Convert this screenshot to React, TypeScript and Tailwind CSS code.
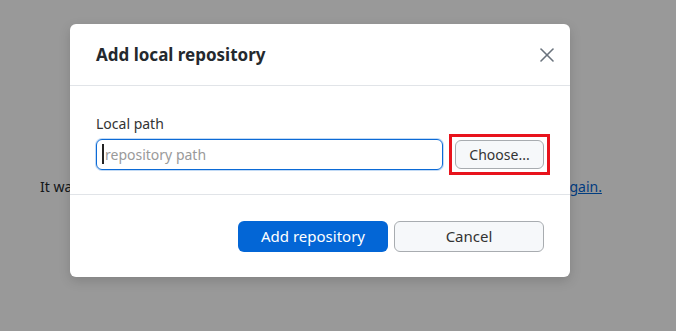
import { X } from "lucide-react";

const font = { fontFamily: '"Noto Sans", "Open Sans", sans-serif' };

const App = () => {
  return (
    <div className="relative w-[676px] h-[331px] bg-white overflow-hidden" style={font}>
      <p className="pt-[177px] pl-[40px] text-[14px] leading-5 text-[#24292e] whitespace-nowrap">
        It was not possible to load the list of repositories. Check the connection and{" "}
        <a href="#" className="text-[#0366d6] underline">
          try again.
        </a>
      </p>

      <div className="absolute inset-0 bg-black/40 pl-[70px] pt-[24px]">
        <div className="w-[500px] bg-white rounded-[6px] shadow-[0_4px_12px_rgba(0,0,0,0.15)]">
          <div className="h-[62px] flex items-center justify-between pl-[26px] pr-[11px] border-b border-[#e1e4e8]">
            <h1 className="text-[17px] font-bold text-[#24292e]">Add local repository</h1>
            <button className="text-[#6a737d]">
              <X size={24} strokeWidth={1.6} />
            </button>
          </div>

          <div className="px-[26px] pt-[28px] pb-[19px] border-b border-[#e1e4e8]">
            <label className="block text-[14px] leading-5 text-[#333]">Local path</label>
            <div className="flex items-center">
              <div className="relative">
                <input
                  placeholder="repository path"
                  className="w-[347px] h-[31px] border border-[#0b6ad6] rounded-[6px] pl-[8px] text-[14px] placeholder:text-[#9a9a9a] outline-none caret-transparent shadow-[0_0_0_1px_rgba(11,106,214,0.25)]"
                />
                <span className="absolute left-[6px] top-[5px] w-[2px] h-[20px] bg-[#222]" />
              </div>
              <div className="ml-[6px] border-[3px] border-[#e8131c] p-[3px]">
                <button className="w-[89px] h-[29px] bg-[#f6f8fa] border border-[#a8acb0] rounded-[6px] text-[14px] text-[#333]">
                  Choose...
                </button>
              </div>
            </div>
          </div>

          <div className="flex justify-end gap-[6px] px-[26px] pt-[26px] pb-[25px]">
            <button className="w-[150px] h-[31px] bg-[#0366d6] rounded-[6px] text-[15px] text-white">
              Add repository
            </button>
            <button className="w-[150px] h-[31px] bg-[#f6f8fa] border border-[#a8acb0] rounded-[6px] text-[15px] text-[#333]">
              Cancel
            </button>
          </div>
        </div>
      </div>
    </div>
  );
};

export default App;
